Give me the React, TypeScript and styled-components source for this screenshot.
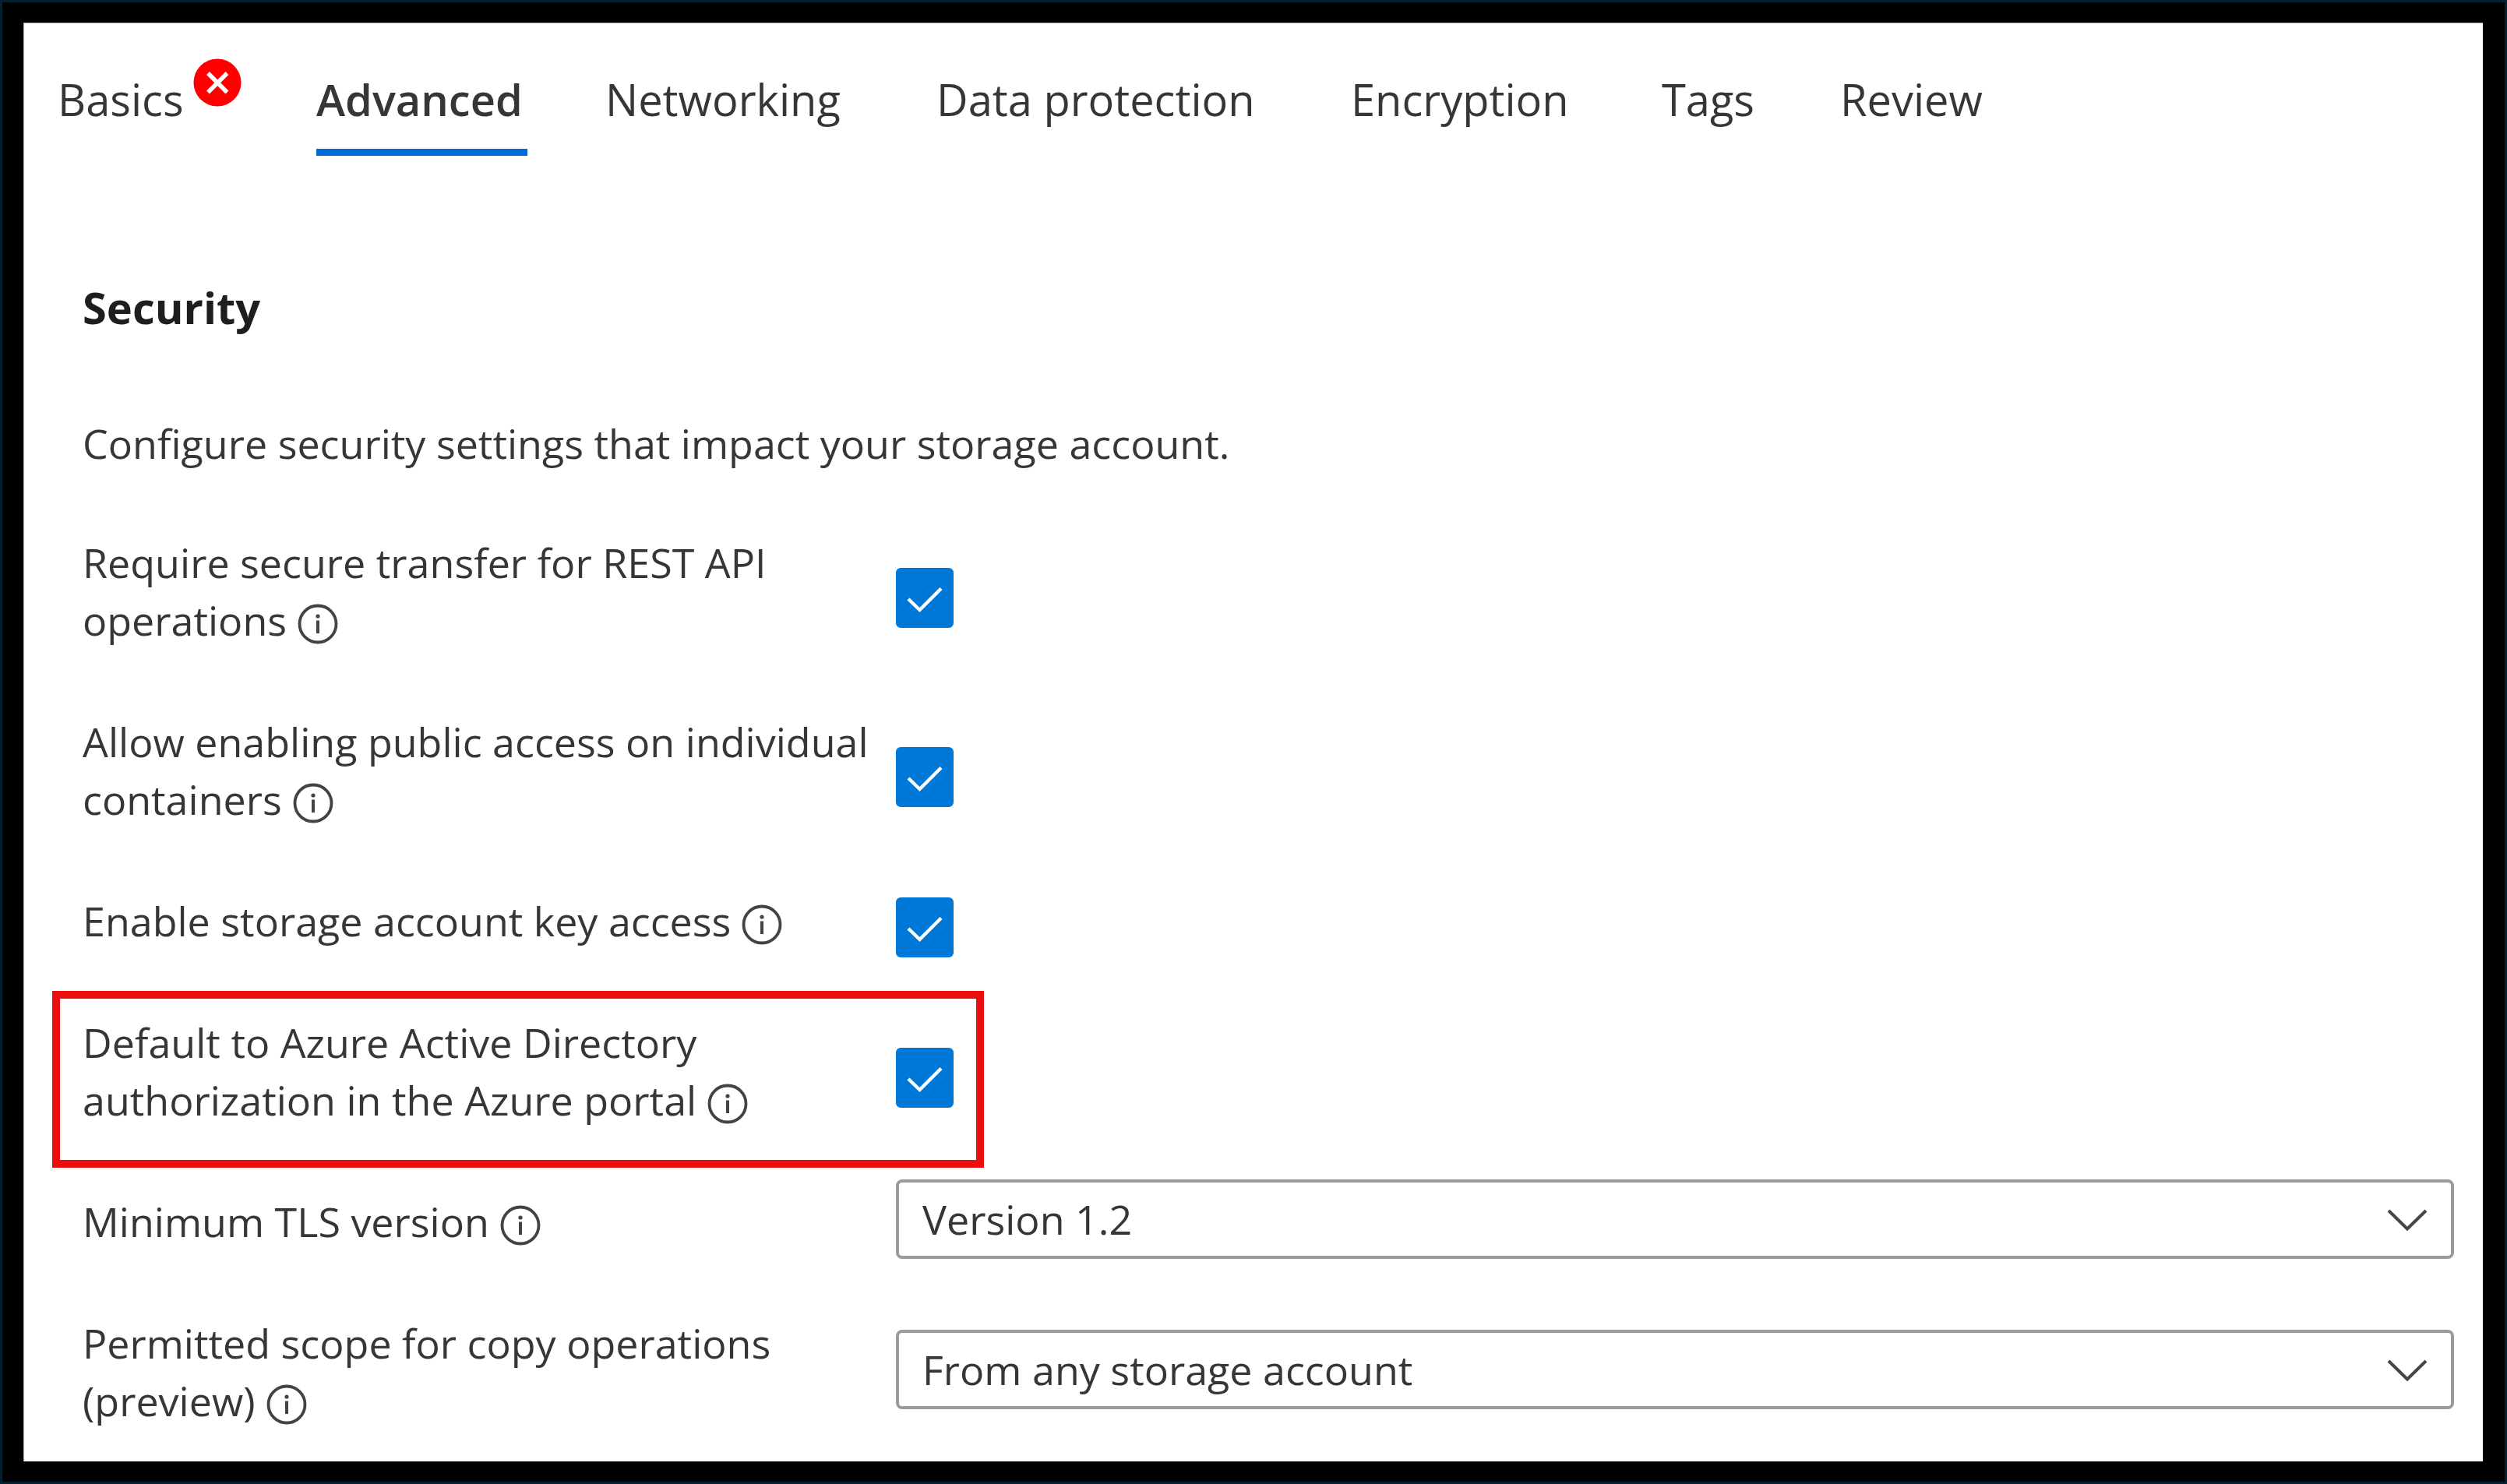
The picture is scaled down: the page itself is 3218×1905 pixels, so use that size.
import React, { useId, useState } from "react";
import styled, { createGlobalStyle, css } from "styled-components";

const ink = "#373635";
const blue = "#0078d7";

const GlobalStyle = createGlobalStyle`
  *, *::before, *::after { box-sizing: border-box; }
  body { margin: 0; background: #05212f; }
  button, select, input { font: inherit; color: inherit; margin: 0; }
`;

const Frame = styled.div`
  display: flex;
  min-height: 100vh;
  border: 3px solid #05212f;
  background: #000;
  padding: 26px 28px 26px 27px;
  font-family: "Open Sans", "Noto Sans", sans-serif;
  color: ${ink};
`;

const Panel = styled.main`
  flex: 1;
  min-width: 0;
  background: #fff;
  box-shadow: inset 1px 1px 0 #b3abad;
`;

const TabBar = styled.div`
  display: grid;
  grid-template-columns: 332px 371px 425px 532px 399px 229px auto;
  justify-items: start;
  padding: 46px 44px 0;
  font-size: 56px;
  line-height: 76px;
`;

const TabButton = styled.button<{ $active: boolean }>`
  display: flex;
  align-items: flex-start;
  gap: 12px;
  padding: 0 6px 26px 0;
  border: 0;
  border-bottom: 9px solid transparent;
  background: none;
  text-align: left;
  white-space: nowrap;
  cursor: pointer;
  ${(p) =>
    p.$active &&
    css`
      border-bottom-color: #006cd4;
      font-weight: 600;
    `}
`;

const TabText = styled.span`
  padding-top: 14px;
`;

const Content = styled.section`
  padding: 156px 37px 24px 76px;
  font-size: 52px;
  line-height: 74px;
`;

const Heading = styled.h2`
  margin: 0;
  font-size: 56px;
  line-height: 76px;
  font-weight: 700;
  color: #1f1e1d;
`;

const Intro = styled.p`
  margin: 100px 0 62px;
`;

const Fields = styled.div`
  display: flex;
  flex-direction: column;
  gap: 54px;
`;

const Row = styled.div<{ $highlighted?: boolean }>`
  display: grid;
  grid-template-columns: 1044px minmax(0, 1fr);
  align-items: center;
  ${(p) =>
    p.$highlighted &&
    css`
      position: relative;
      &::after {
        content: "";
        position: absolute;
        top: -12px;
        bottom: -39px;
        left: -39px;
        width: 1196px;
        border: 10px solid #ea0e0e;
        pointer-events: none;
      }
    `}
`;

const LabelCell = styled.div`
  padding: 17px 20px 11px 0;
`;

const InfoButton = styled.button`
  display: inline-flex;
  vertical-align: -11px;
  margin-left: 14px;
  padding: 0;
  border: 0;
  background: none;
  cursor: pointer;
`;

const CheckWrap = styled.span`
  position: relative;
  display: flex;
  width: 74px;
  margin-top: 22px;
`;

const CheckInput = styled.input`
  appearance: none;
  width: 74px;
  height: 77px;
  border: 3px solid ${ink};
  border-radius: 6px;
  background: #fff;
  cursor: pointer;
  &:checked {
    border-color: ${blue};
    background: ${blue};
  }
`;

const CheckMark = styled.svg`
  position: absolute;
  inset: 0;
  pointer-events: none;
`;

const SelectWrap = styled.div`
  position: relative;
  display: flex;
`;

const SelectInput = styled.select`
  appearance: none;
  flex: 1;
  min-width: 0;
  height: 102px;
  padding: 0 110px 0 30px;
  border: 4px solid #9c9b99;
  border-radius: 8px;
  background: #fff;
  cursor: pointer;
`;

const Chevron = styled.svg`
  position: absolute;
  right: 34px;
  top: 38px;
  pointer-events: none;
`;

const ErrorBadge = () => (
  <svg width="62" height="62" viewBox="0 0 62 62" role="img" aria-label="Error">
    <circle cx="31" cy="31" r="30.5" fill="#fe0000" />
    <path d="M19 19 43.5 43.5M43.5 19 19 43.5" stroke="#fff" strokeWidth="5.4" />
  </svg>
);

const InfoIcon = () => (
  <svg width="52" height="52" viewBox="0 0 52 52" fill="none" aria-hidden="true">
    <circle cx="26" cy="26" r="23.5" stroke="#45433f" strokeWidth="3.8" />
    <circle cx="26" cy="16" r="2.6" fill="#45433f" />
    <path d="M26 21.5V38" stroke="#45433f" strokeWidth="4" />
  </svg>
);

function FieldLabel({ id, text }: { id: string; text: string }) {
  return (
    <LabelCell>
      <label htmlFor={id}>{text}</label>
      <InfoButton type="button" aria-label={`About ${text}`}>
        <InfoIcon />
      </InfoButton>
    </LabelCell>
  );
}

function CheckField({ text, highlighted }: { text: string; highlighted?: boolean }) {
  const id = useId();
  const [checked, setChecked] = useState(true);
  return (
    <Row $highlighted={highlighted}>
      <FieldLabel id={id} text={text} />
      <CheckWrap>
        <CheckInput
          id={id}
          type="checkbox"
          checked={checked}
          onChange={(e) => setChecked(e.target.checked)}
        />
        {checked && (
          <CheckMark width="74" height="77" viewBox="0 0 74 77" fill="none" aria-hidden="true">
            <path d="M16 40 30.5 54 58 26.5" stroke="#fff" strokeWidth="4.4" />
          </CheckMark>
        )}
      </CheckWrap>
    </Row>
  );
}

function SelectField({ text, options }: { text: string; options: string[] }) {
  const id = useId();
  return (
    <Row>
      <FieldLabel id={id} text={text} />
      <SelectWrap>
        <SelectInput id={id} defaultValue={options[0]}>
          {options.map((o) => (
            <option key={o}>{o}</option>
          ))}
        </SelectInput>
        <Chevron width="52" height="28" viewBox="0 0 52 28" fill="none" aria-hidden="true">
          <path d="M2 2 26 25.5 50 2" stroke="#484644" strokeWidth="4" />
        </Chevron>
      </SelectWrap>
    </Row>
  );
}

const tabs = ["Basics", "Advanced", "Networking", "Data protection", "Encryption", "Tags", "Review"];

export default function App() {
  const [active, setActive] = useState("Advanced");
  return (
    <>
      <GlobalStyle />
      <Frame>
        <Panel>
          <TabBar role="tablist">
            {tabs.map((name) => (
              <TabButton
                key={name}
                type="button"
                role="tab"
                aria-selected={name === active}
                $active={name === active}
                onClick={() => setActive(name)}
              >
                <TabText>{name}</TabText>
                {name === "Basics" && <ErrorBadge />}
              </TabButton>
            ))}
          </TabBar>
          <Content>
            <Heading>Security</Heading>
            <Intro>Configure security settings that impact your storage account.</Intro>
            <Fields>
              <CheckField text="Require secure transfer for REST API operations" />
              <CheckField text="Allow enabling public access on individual containers" />
              <CheckField text="Enable storage account key access" />
              <CheckField text="Default to Azure Active Directory authorization in the Azure portal" highlighted />
              <SelectField text="Minimum TLS version" options={["Version 1.2"]} />
              <SelectField text="Permitted scope for copy operations (preview)" options={["From any storage account"]} />
            </Fields>
          </Content>
        </Panel>
      </Frame>
    </>
  );
}
